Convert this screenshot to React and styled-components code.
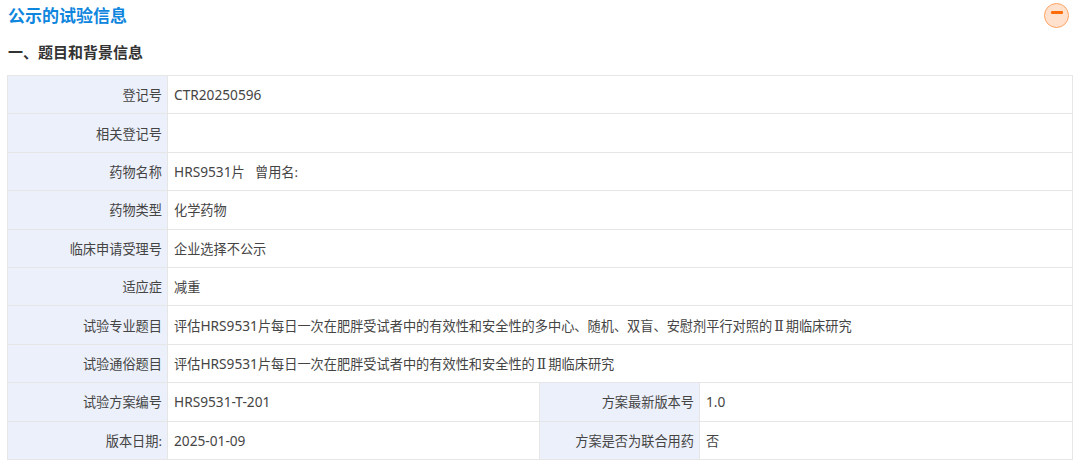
import styled, { createGlobalStyle } from 'styled-components';

const GlobalStyle = createGlobalStyle`
  * {
    box-sizing: border-box;
  }
  body {
    margin: 0;
    background: #fff;
    font-family: "Noto Sans", "Noto Sans CJK SC", sans-serif;
  }
`;

const Page = styled.div`
  width: 1080px;
  height: 467px;
  padding: 0 7px;
  overflow: hidden;
`;

const TitleBar = styled.div`
  display: flex;
  justify-content: space-between;
  align-items: center;
  height: 30px;
  padding: 0 4px 0 1px;
`;

const Title = styled.h2`
  margin: 2px 0 0;
  font-size: 17px;
  line-height: 30px;
  font-weight: 700;
  color: #0f86de;
`;

const Collapse = styled.button`
  display: flex;
  align-items: center;
  justify-content: center;
  width: 25px;
  height: 25px;
  padding: 0 0 5px;
  border: 1px solid #ffa361;
  border-radius: 50%;
  background: #ffe1cd;
`;

const Dash = styled.span`
  width: 12px;
  height: 3px;
  border-radius: 1px;
  background: #ff6c0a;
`;

const Section = styled.h3`
  margin: 0;
  height: 45px;
  padding: 12px 0 0 1px;
  font-size: 15px;
  line-height: 20px;
  font-weight: 700;
  color: #333;
`;

const Table = styled.table`
  width: 1065px;
  border-collapse: collapse;
  table-layout: fixed;
  font-size: 13.2px;
`;

const Row = styled.tr`
  height: 38.4px;
`;

const Label = styled.th`
  padding: 0 5px 0 0;
  border: 1px solid #e6e6e6;
  background: #ecf0fa;
  font-weight: 400;
  text-align: right;
  color: #444;
`;

const Value = styled.td`
  padding: 0 6px;
  border: 1px solid #e6e6e6;
  color: #444;
`;

const Latin = styled.span`
  font-size: 13.7px;
`;

const Numeral = styled.span`
  padding: 0 2px;
  font-family: "DejaVu Serif", "Liberation Serif", serif;
  font-size: 14px;
`;

// latin runs and the roman numeral are set a bit differently from the chinese text
function Text({ children }) {
  return children.split(/([A-Za-z0-9.-]+|Ⅱ)/).map((part, i) => {
    if (part === 'Ⅱ') return <Numeral key={i}>{part}</Numeral>;
    if (i % 2 === 1) return <Latin key={i}>{part}</Latin>;
    return part;
  });
}

const rows = [
  ['登记号', 'CTR20250596'],
  ['相关登记号', ''],
  ['药物名称', 'HRS9531片\u00a0\u00a0\u00a0曾用名:'],
  ['药物类型', '化学药物'],
  ['临床申请受理号', '企业选择不公示'],
  ['适应症', '减重'],
  ['试验专业题目', '评估HRS9531片每日一次在肥胖受试者中的有效性和安全性的多中心、随机、双盲、安慰剂平行对照的Ⅱ期临床研究'],
  ['试验通俗题目', '评估HRS9531片每日一次在肥胖受试者中的有效性和安全性的Ⅱ期临床研究'],
];

const splitRows = [
  ['试验方案编号', 'HRS9531-T-201', '方案最新版本号', '1.0'],
  ['版本日期:', '2025-01-09', '方案是否为联合用药', '否'],
];

export default function App() {
  return (
    <Page>
      <GlobalStyle />
      <TitleBar>
        <Title>公示的试验信息</Title>
        <Collapse aria-label="收起">
          <Dash />
        </Collapse>
      </TitleBar>
      <Section>一、题目和背景信息</Section>
      <Table>
        <colgroup>
          <col width="160" />
          <col width="372" />
          <col width="160" />
          <col width="373" />
        </colgroup>
        <tbody>
          {rows.map(([label, value]) => (
            <Row key={label}>
              <Label>{label}</Label>
              <Value colSpan={3}><Text>{value}</Text></Value>
            </Row>
          ))}
          {splitRows.map(([labelA, valueA, labelB, valueB]) => (
            <Row key={labelA}>
              <Label>{labelA}</Label>
              <Value><Text>{valueA}</Text></Value>
              <Label>{labelB}</Label>
              <Value><Text>{valueB}</Text></Value>
            </Row>
          ))}
        </tbody>
      </Table>
    </Page>
  );
}
